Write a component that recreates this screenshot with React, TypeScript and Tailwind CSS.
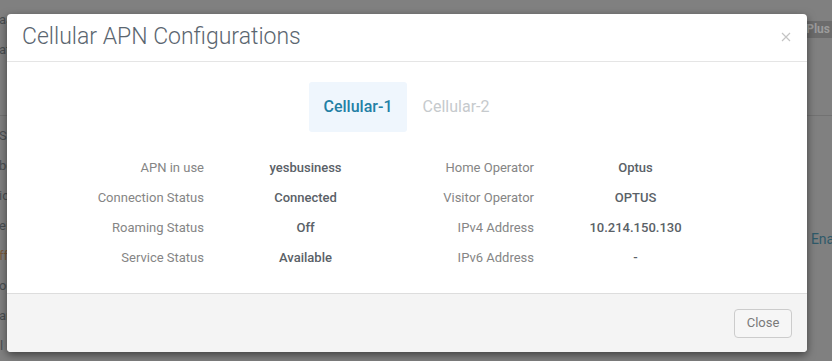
import React from "react";

const LEFT_ROWS = [
  { label: "Home Operator", value: "Optus" },
  { label: "Visitor Operator", value: "OPTUS" },
  { label: "IPv4 Address", value: "10.214.150.130" },
  { label: "IPv6 Address", value: "-" },
];

const ROWS = [
  { label: "APN in use", value: "yesbusiness" },
  { label: "Connection Status", value: "Connected" },
  { label: "Roaming Status", value: "Off" },
  { label: "Service Status", value: "Available" },
];

const BG_TOP = ["aa", "at"];
const BG_BOTTOM = ["Sig", "bo", "ic", "ei", "ff", "og", "ar"];

function BackgroundPage() {
  return (
    <div className="flex h-full w-full flex-col text-[13px] text-[#4a4f52]">
      <div className="flex h-[128px] border-b border-[#727272]">
        <div className="flex flex-col pt-[5px]">
          {BG_TOP.map((t) => (
            <div key={t} className="h-[30px] leading-[30px] -ml-[1px]">
              {t}
            </div>
          ))}
        </div>
        <div className="ml-auto pt-[21px]">
          <span className="block h-[17px] bg-[#6c6c6c] px-[2px] text-[12px] font-bold leading-[17px] text-[#9c9c9c]">
            Plus
          </span>
        </div>
      </div>
      <div className="flex flex-1">
        <div className="flex flex-col pt-[5px]">
          {BG_BOTTOM.map((t) => (
            <div
              key={t}
              className={`h-[30px] leading-[30px] -ml-[1px] ${t === "ff" ? "text-[#7a5a3a]" : ""}`}
            >
              {t}
            </div>
          ))}
          <div className="flex h-[30px] leading-[30px]">
            <span className="w-[204px]">l ID</span>
            <span>649</span>
          </div>
        </div>
        <div className="ml-auto flex w-[26px] flex-col pt-[113px]">
          <span className="-ml-[2px] whitespace-nowrap text-[14px] text-[#2f5a6a]">| Ena</span>
        </div>
      </div>
    </div>
  );
}

export default function App() {
  return (
    <div className="relative h-[361px] w-[832px] overflow-hidden bg-[#808080] font-['Roboto',sans-serif]">
      <BackgroundPage />

      <div className="absolute left-[7px] top-[14px] w-[800px] rounded-[4px] bg-white shadow-[0_3px_9px_rgba(0,0,0,0.5)]">
        <div className="flex h-[48px] items-center justify-between border-b border-[#e5e5e5] pl-[15px] pr-[16px]">
          <h4 className="text-[23px] font-light text-[#5b6670]">Cellular APN Configurations</h4>
          <svg width="10" height="10" viewBox="0 0 10 10" className="mb-[2px]">
            <path d="M1 1 L9 9 M9 1 L1 9" stroke="#c4c4c4" strokeWidth="1.2" />
          </svg>
        </div>

        <div className="flex h-[231px] flex-col items-center pt-[20px]">
          <div className="flex">
            <div className="flex h-[50px] w-[98px] items-center justify-center rounded-[3px] bg-[#eff6fd] text-[16px] font-medium text-[#2380a5]">
              Cellular-1
            </div>
            <div className="flex h-[50px] w-[98px] items-center justify-center text-[16px] text-[#c6cacd]">
              Cellular-2
            </div>
          </div>

          <div className="mt-[21px] grid grid-cols-[127px_203px_127px_203px] text-[13px]">
            {ROWS.map((r, i) => (
              <React.Fragment key={r.label}>
                <div className="h-[30px] text-right leading-[30px] text-[#858585]">{r.label}</div>
                <div className="h-[30px] text-center font-medium leading-[30px] text-[#5a6167]">{r.value}</div>
                <div className="h-[30px] text-right leading-[30px] text-[#858585]">{LEFT_ROWS[i].label}</div>
                <div className="h-[30px] text-center font-medium leading-[30px] text-[#5a6167]">{LEFT_ROWS[i].value}</div>
              </React.Fragment>
            ))}
          </div>
        </div>

        <div className="flex h-[59px] items-center justify-end rounded-b-[4px] border-t border-[#dddddd] bg-[#f4f4f4] px-[15px]">
          <button className="h-[29px] w-[58px] rounded-[4px] border border-[#cccccc] bg-[#f6f6f6] text-[13px] text-[#7a7a7a]">
            Close
          </button>
        </div>
      </div>
    </div>
  );
}
